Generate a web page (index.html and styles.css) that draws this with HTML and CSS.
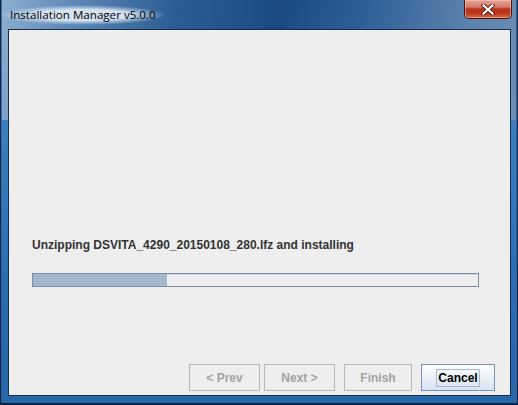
FILE: index.html
```html
<!DOCTYPE html>
<html>
<head>
<meta charset="utf-8">
<link rel="stylesheet" href="styles.css">
</head>
<body>
<div class="window">
  <div class="titlebar">
    <span class="title">Installation Manager v5.0.0</span>
    <button class="close" aria-label="Close">
      <svg width="14" height="11" viewBox="0 0 14 11"><path d="M2.5 1.5 L11.5 9.5 M11.5 1.5 L2.5 9.5" stroke="#5a1a14" stroke-width="4" stroke-linecap="square"/><path d="M2.5 1.5 L11.5 9.5 M11.5 1.5 L2.5 9.5" stroke="#ffffff" stroke-width="2.2" stroke-linecap="square"/></svg>
    </button>
  </div>
  <div class="panel">
    <div class="status">
      <p class="message">Unzipping DSVITA_4290_20150108_280.lfz and installing</p>
      <div class="progress"><div class="fill" style="width:30%"></div></div>
    </div>
    <div class="buttons">
      <button class="btn disabled prev">&lt; Prev</button>
      <button class="btn disabled next">Next &gt;</button>
      <button class="btn disabled finish">Finish</button>
      <button class="btn cancel"><span class="focus">Cancel</span></button>
    </div>
  </div>
</div>
</body>
</html>
```
FILE: styles.css
```css
html, body {
  margin: 0;
  padding: 0;
  background: #0f2a4a;
}
.window {
  width: 518px;
  height: 405px;
  box-sizing: border-box;
  display: flex;
  flex-direction: column;
  padding: 0 7px 9px 8px;
  background:
    linear-gradient(90deg, #0c2a52 0, #0c2a52 1px, transparent 2px, transparent 516px, #0c2a52 517px),
    linear-gradient(180deg, transparent 0, transparent 402px, #0c2340 403px),
    linear-gradient(100deg, #8eb0d2 0%, #5f89b8 12%, #2b5d95 30%, #1b4a82 48%, #2d5f97 62%, #5c82ad 80%, #7a98bb 100%);
  position: relative;
}
.window::before {
  content: "";
  position: absolute;
  left: 2px;
  right: 2px;
  top: 120px;
  bottom: 2px;
  background: linear-gradient(180deg, #3c7ec2, #2a6cb2 60%, #2666ab);
  z-index: 0;
}
.titlebar {
  height: 29px;
  display: flex;
  justify-content: space-between;
  align-items: flex-start;
  position: relative;
  z-index: 1;
}
.title {
  font-family: "Open Sans", "Noto Sans", sans-serif;
  font-size: 11.6px;
  color: #000;
  line-height: 20px;
  margin: 5px 0 0 -8px;
  padding: 0 10px;
  background: radial-gradient(ellipse closest-side at center, rgba(235,244,252,0.85) 55%, rgba(235,244,252,0) 100%);
}
.close {
  width: 48px;
  height: 19px;
  margin: 0 -1px 0 0;
  padding: 0;
  border: 1px solid #4b1410;
  border-top: none;
  border-radius: 0 0 5px 5px;
  background: linear-gradient(180deg, #e4a397 0%, #d27968 40%, #b5321d 50%, #c0391f 75%, #d86a43 100%);
  box-shadow: inset 0 0 0 1px rgba(255,220,210,0.45);
  display: flex;
  align-items: center;
  justify-content: center;
}
.close svg {
  display: block;
}
.panel {
  flex: 1;
  position: relative;
  z-index: 1;
  background: #eeeeee;
  border: 1px solid #172d4a;
  display: flex;
  flex-direction: column;
  justify-content: space-between;
  padding: 0 15px 4px 23px;
}
.status {
  margin-top: 208px;
}
.message {
  margin: 0;
  font-family: "Liberation Sans", Arial, sans-serif;
  font-weight: bold;
  font-size: 12px;
  line-height: 14px;
  color: #333333;
}
.progress {
  margin-top: 21px;
  width: 445px;
  height: 12px;
  border: 1px solid #7a8ea4;
  background: #eeeeee;
  box-shadow: inset 0 1px 0 #c8d8ea;
}
.fill {
  height: 12px;
  background: #a3b8cc;
}
.buttons {
  display: flex;
  justify-content: flex-end;
  align-items: center;
}
.btn {
  height: 27px;
  box-sizing: border-box;
  font-family: "Liberation Sans", Arial, sans-serif;
  font-weight: bold;
  font-size: 12px;
  padding: 0;
  background: #eeeeee;
  border: 1px solid #b8b8b8;
  color: #a3a3a3;
}
.prev { width: 71px; }
.next { width: 71px; margin-left: 4px; }
.finish { width: 68px; margin-left: 9px; }
.cancel {
  width: 74px;
  margin-left: 9px;
  color: #000;
  border: 1px solid #7c94b4;
  background: linear-gradient(180deg, #ffffff 0%, #eef3fa 40%, #d7e2f1 100%);
}
.focus {
  display: inline-block;
  border: 1px solid #a8b8cc;
  padding: 1px 1px;
  line-height: 14px;
}
```
